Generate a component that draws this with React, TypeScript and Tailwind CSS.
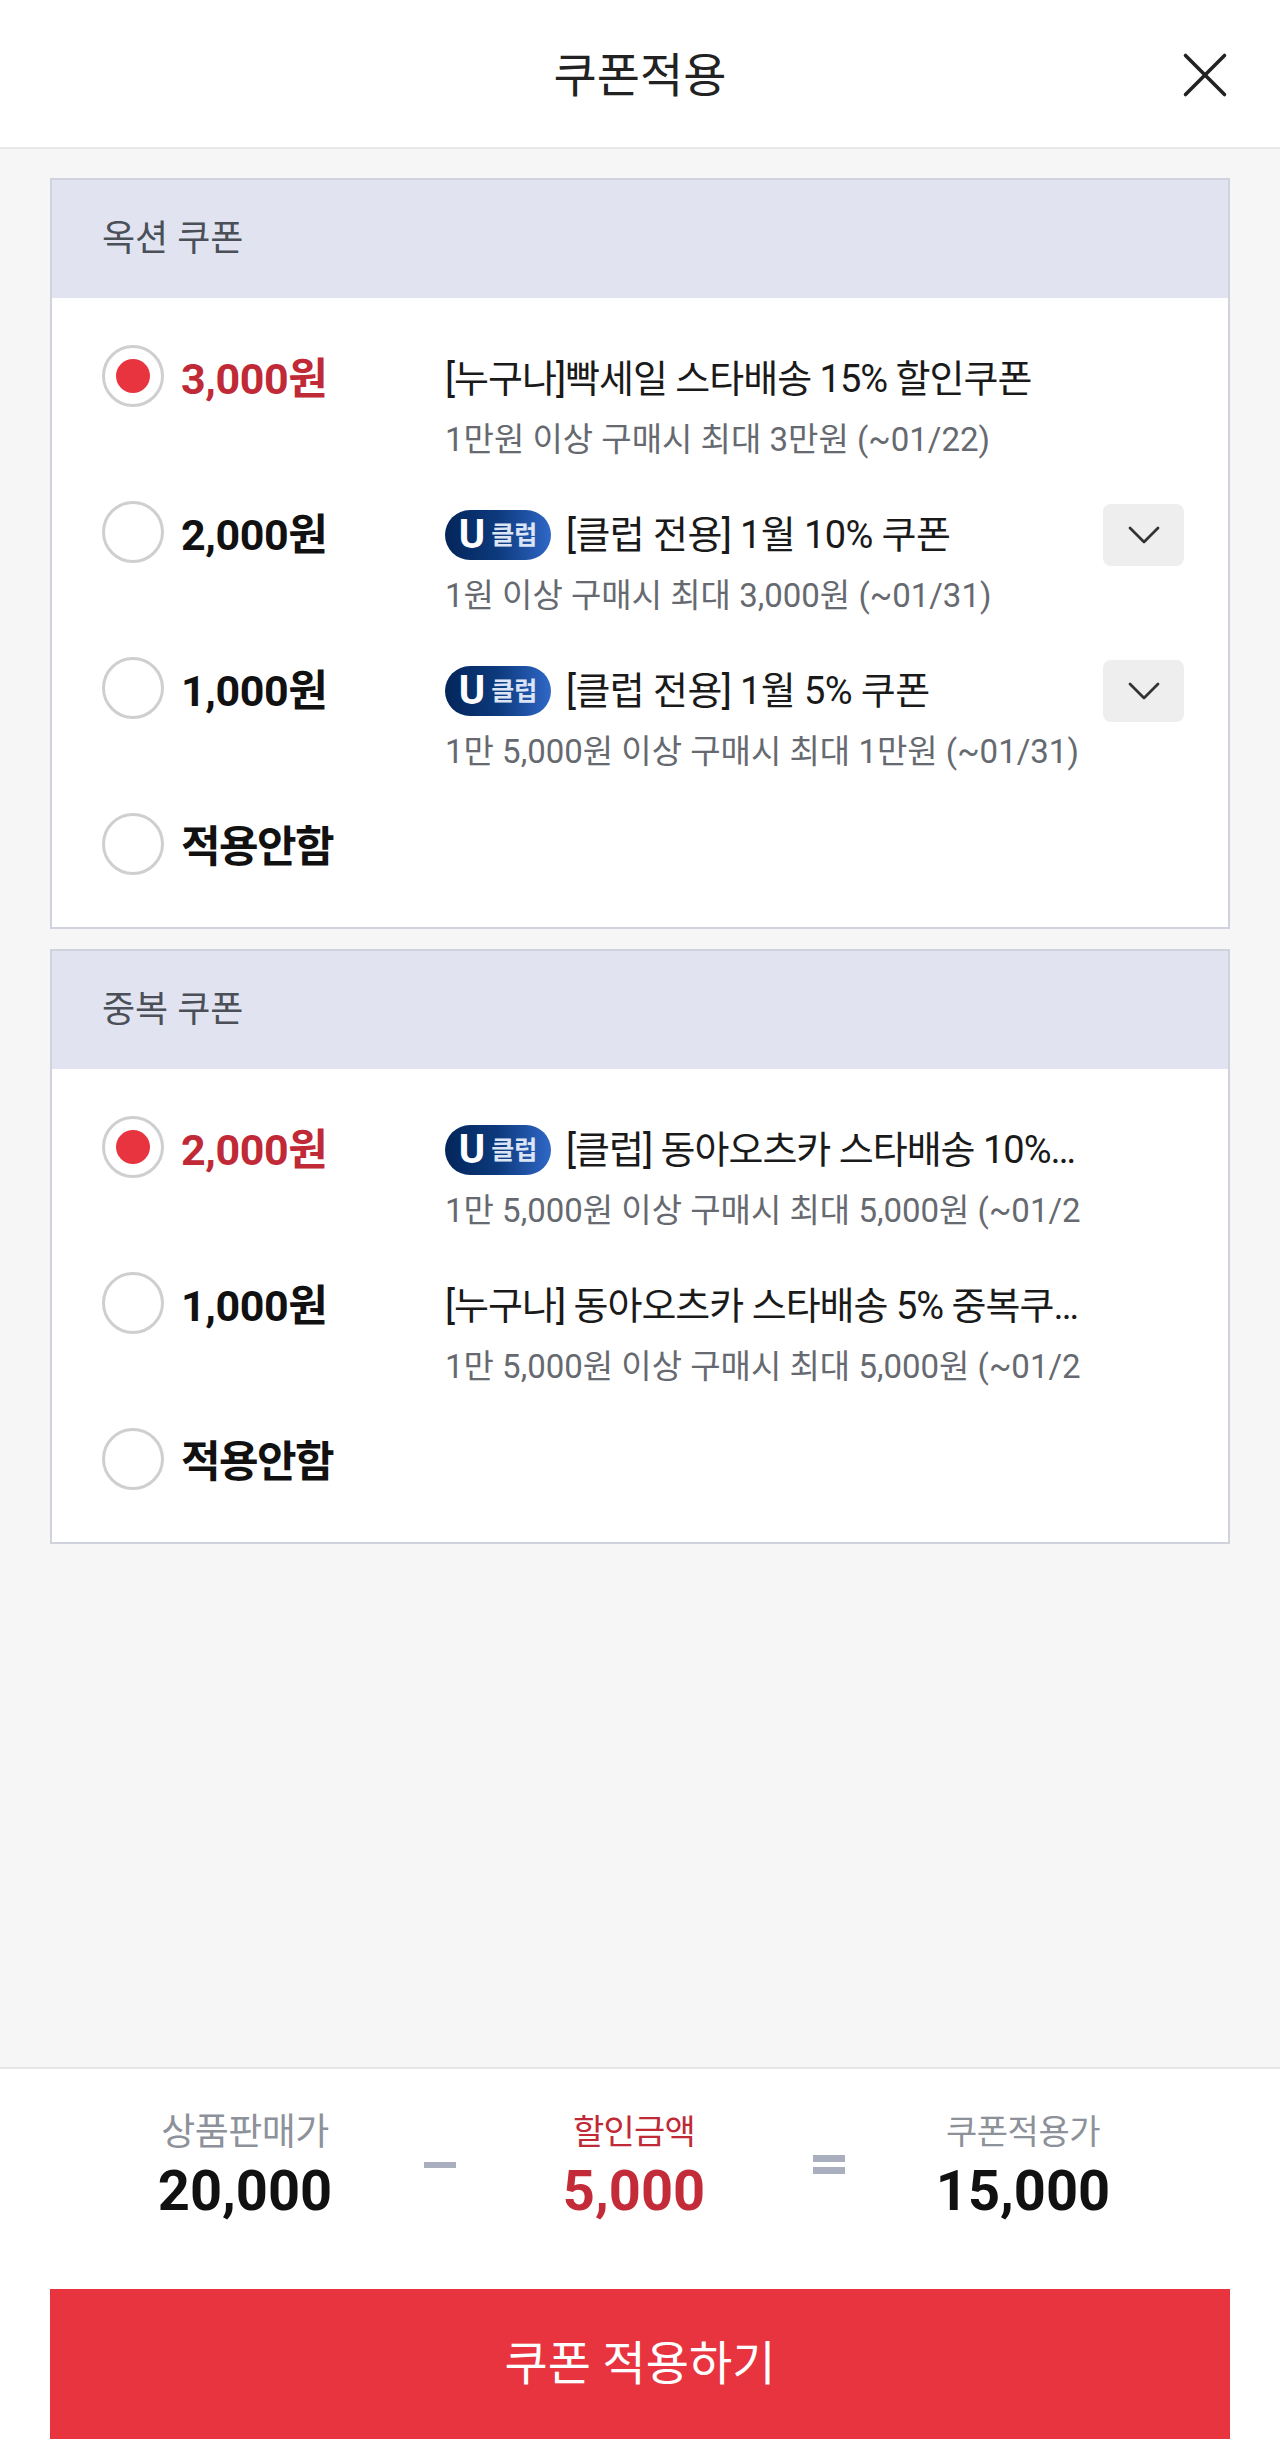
import { X, ChevronDown } from 'lucide-react'

type Coupon = {
  amount: string
  title?: string
  desc?: string
  club?: boolean
  more?: boolean
  selected?: boolean
}

const optionCoupons: Coupon[] = [
  { amount: '3,000원', title: '[누구나]빡세일 스타배송 15% 할인쿠폰', desc: '1만원 이상 구매시 최대 3만원 (~01/22)', selected: true },
  { amount: '2,000원', title: '[클럽 전용] 1월 10% 쿠폰', desc: '1원 이상 구매시 최대 3,000원 (~01/31)', club: true, more: true },
  { amount: '1,000원', title: '[클럽 전용] 1월 5% 쿠폰', desc: '1만 5,000원 이상 구매시 최대 1만원 (~01/31)', club: true, more: true },
  { amount: '적용안함' },
]

const dupCoupons: Coupon[] = [
  { amount: '2,000원', title: '[클럽] 동아오츠카 스타배송 10% 중복쿠폰', desc: '1만 5,000원 이상 구매시 최대 5,000원 (~01/22)', club: true, selected: true },
  { amount: '1,000원', title: '[누구나] 동아오츠카 스타배송 5% 중복쿠폰', desc: '1만 5,000원 이상 구매시 최대 5,000원 (~01/22)' },
  { amount: '적용안함' },
]

function ClubBadge() {
  return (
    <span className="flex h-[50px] w-[106px] shrink-0 items-center justify-center gap-[6px] rounded-full bg-gradient-to-r from-[#04255a] via-[#0d3a7d] to-[#2f68c8] text-white">
      <span className="text-[40px] font-bold leading-none">U</span>
      <span className="text-[25px] font-bold leading-none text-[#dbe5f5]">클럽</span>
    </span>
  )
}

function CouponRow({ coupon }: { coupon: Coupon }) {
  return (
    <div className="flex h-[156px] items-start last:h-[62px]">
      <span className="flex h-[62px] w-[62px] shrink-0 items-center justify-center rounded-full border-[3px] border-[#cfcfcf] bg-white">
        {coupon.selected && <span className="h-[34px] w-[34px] rounded-full bg-[#e8343f]" />}
      </span>
      <span className={`ml-[17px] w-[264px] shrink-0 text-[43px] font-bold leading-[68px] ${coupon.title ? 'tracking-[-0.4px]' : 'tracking-[-1.6px]'} ${coupon.selected ? 'text-[#bf2a36]' : 'text-[#111111]'}`}>
        {coupon.amount}
      </span>
      {coupon.title && (
        <div className="w-[637px] shrink-0 pt-[6px]">
          <div className="flex h-[56px] items-center gap-[15px]">
            {coupon.club && <ClubBadge />}
            <span className={`min-w-0 truncate text-[38px] leading-[56px] text-[#1a1a1a] ${coupon.more ? 'tracking-[-0.6px]' : 'tracking-[-1px]'}`}>{coupon.title}</span>
          </div>
          <p className="mt-[9px] overflow-hidden whitespace-nowrap text-[33px] leading-[48px] text-[#666a70]">
            {coupon.desc}
          </p>
        </div>
      )}
      {coupon.more && (
        <button className="mt-[3px] ml-[21px] flex h-[62px] w-[81px] shrink-0 items-center justify-center rounded-[8px] bg-[#eeeeee] text-[#333333]">
          <ChevronDown size={56} strokeWidth={1.2} />
        </button>
      )}
    </div>
  )
}

function CouponBox({ title, coupons }: { title: string; coupons: Coupon[] }) {
  return (
    <section className="border-2 border-[#d0d3de] bg-white">
      <h2 className="flex h-[118px] items-center bg-[#e1e4f0] pl-[50px] text-[36px] font-normal text-[#4b4f58]">{title}</h2>
      <div className="px-[50px] pt-[47px] pb-[52px]">
        {coupons.map((coupon, idx) => (
          <CouponRow key={idx} coupon={coupon} />
        ))}
      </div>
    </section>
  )
}

function Summary({ label, labelClass, value, red }: { label: string; labelClass: string; value: string; red?: boolean }) {
  return (
    <div className="w-[300px] text-center">
      <div className={`leading-[53px] ${labelClass} ${red ? 'text-[#bf2a36]' : 'text-[#8d9199]'}`}>{label}</div>
      <div className={`text-[56px] font-bold leading-[64px] ${red ? 'text-[#c42b38]' : 'text-[#111111]'}`}>{value}</div>
    </div>
  )
}

export default function App() {
  return (
    <div className="flex h-[2463px] flex-col bg-[#f6f6f6] font-['Roboto','Noto_Sans_CJK_KR',sans-serif]">
      <header className="relative flex h-[149px] shrink-0 items-center justify-center border-b-2 border-[#e8e8e8] bg-white">
        <h1 className="pt-[5px] text-[47px] font-normal text-[#222222]">쿠폰적용</h1>
        <X className="absolute top-[36px] right-[36px] text-[#222222]" size={78} strokeWidth={1.1} />
      </header>

      <main className="flex flex-1 flex-col gap-[20px] px-[50px] pt-[29px]">
        <CouponBox title="옥션 쿠폰" coupons={optionCoupons} />
        <CouponBox title="중복 쿠폰" coupons={dupCoupons} />
      </main>

      <footer className="h-[396px] shrink-0 border-t-2 border-[#e6e6e6] bg-white px-[50px] pt-[37px]">
        <div className="ml-[45px] flex items-center">
          <Summary label="상품판매가" labelClass="text-[37px] tracking-[-0.5px]" value="20,000" />
          <div className="flex w-[89px] justify-center">
            <span className="h-[6px] w-[32px] bg-[#a9afbf]" />
          </div>
          <Summary label="할인금액" labelClass="text-[34px] tracking-[-0.8px]" value="5,000" red />
          <div className="flex w-[89px] flex-col items-center gap-[5px]">
            <span className="h-[7px] w-[32px] bg-[#a9afbf]" />
            <span className="h-[7px] w-[32px] bg-[#a9afbf]" />
          </div>
          <Summary label="쿠폰적용가" labelClass="text-[34px] tracking-[-0.5px]" value="15,000" />
        </div>
        <button className="mt-[66px] flex h-[150px] w-full items-center justify-center bg-[#e8343f] text-[47px] text-white">
          쿠폰 적용하기
        </button>
      </footer>
    </div>
  )
}
